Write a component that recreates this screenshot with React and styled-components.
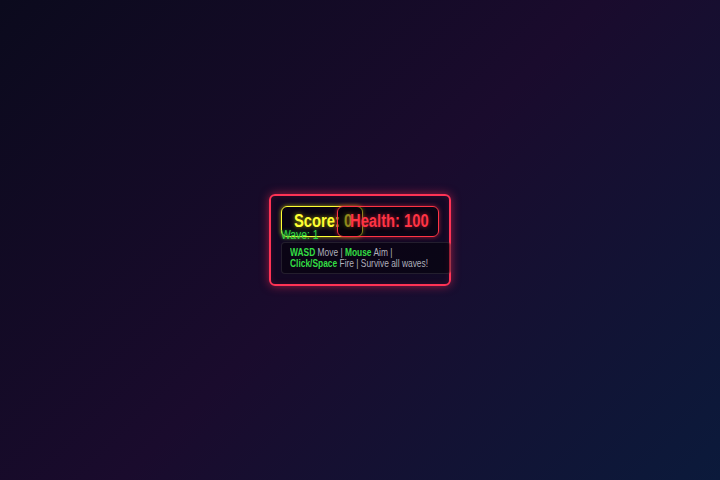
import React from 'react'
import styled, { createGlobalStyle } from 'styled-components'

const GlobalStyle = createGlobalStyle`
  html, body {
    margin: 0;
    padding: 0;
    height: 100%;
  }
  body {
    font-family: "Liberation Sans Narrow", "Liberation Sans", Arial, sans-serif;
  }
  #root {
    height: 100%;
  }
`

const Page = styled.div`
  height: 100vh;
  display: flex;
  align-items: center;
  justify-content: center;
  background: linear-gradient(135deg, #0b0a1d 0%, #1a0b2d 50%, #0b1a3b 100%);
`

const Panel = styled.div`
  box-sizing: border-box;
  width: 182px;
  display: flex;
  flex-direction: column;
  align-items: flex-start;
  padding: 10px;
  border: 2px solid #ff3355;
  border-radius: 6px;
  background: rgba(8, 4, 20, 0.35);
  box-shadow: 0 0 10px rgba(255, 40, 80, 0.55), inset 0 0 6px rgba(255, 40, 80, 0.15);
`

// the reference is set in a narrow face; squeeze the regular one to match
const Narrow = styled.span`
  display: ${p => (p.$block ? 'block' : 'inline-block')};
  width: ${p => p.$width || 'auto'};
  white-space: nowrap;
  transform: scaleX(${p => p.$scale || 0.82});
  transform-origin: 0 50%;
`

const Hud = styled.div`
  display: flex;
  align-items: stretch;
`

const Stat = styled.div`
  position: relative;
  box-sizing: border-box;
  width: ${p => p.$width}px;
  padding: 4px 12px;
  font-size: 18px;
  line-height: 21px;
  font-weight: bold;
  border: 1px solid ${p => p.$color};
  border-radius: 6px;
  background: rgba(0, 0, 0, 0.45);
  color: ${p => p.$color};
  text-shadow: 0 0 6px ${p => p.$glow};
  box-shadow: 0 0 4px ${p => p.$glow};
  & + & {
    margin-left: -26px;
  }
`

const Wave = styled.div`
  position: relative;
  margin-top: -8px;
  font-size: 12px;
  line-height: 12px;
  color: #33dd44;
  text-shadow: 0 0 4px rgba(51, 221, 68, 0.6);
`

const Help = styled.div`
  width: 170px;
  flex-shrink: 0;
  box-sizing: border-box;
  margin-top: 1px;
  padding: 4px 8px;
  font-size: 10.5px;
  line-height: 11px;
  color: #b0b0bc;
  background: rgba(0, 0, 0, 0.4);
  border: 1px solid rgba(255, 255, 255, 0.1);
  border-radius: 4px;
`

const Key = styled.b`
  color: #33dd44;
`

export default function App() {
  return (
    <>
      <GlobalStyle />
      <Page>
        <Panel>
          <Hud>
            <Stat $width={82} $color="#ffff33" $glow="rgba(255, 255, 0, 0.6)">
              <Narrow>Score: 0</Narrow>
            </Stat>
            <Stat $width={102} $color="#ff3344" $glow="rgba(255, 40, 60, 0.6)">
              <Narrow>Health: 100</Narrow>
            </Stat>
          </Hud>
          <Wave>
            <Narrow $scale={0.86}>Wave: 1</Narrow>
          </Wave>
          <Help>
            <Narrow $block $scale={0.8} $width="190px">
              <Key>WASD</Key> Move | <Key>Mouse</Key> Aim |<br />
              <Key>Click/Space</Key> Fire | Survive all waves!
            </Narrow>
          </Help>
        </Panel>
      </Page>
    </>
  )
}
